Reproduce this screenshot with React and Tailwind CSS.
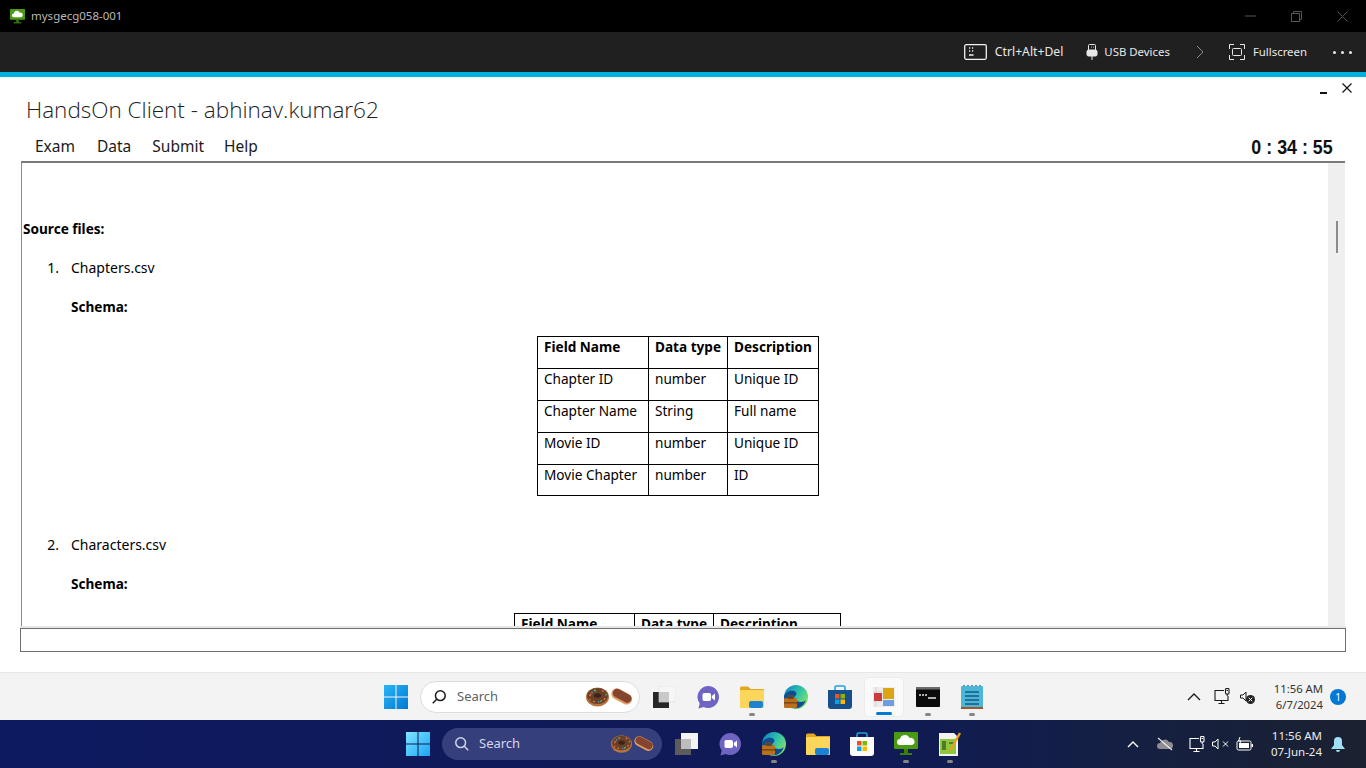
import React from 'react';

const sans = 'font-["Noto_Sans",sans-serif]';

const StartLogo = ({ light }) => (
  <svg width="24" height="24" viewBox="0 0 24 24">
    <defs>
      <linearGradient id={light ? 'winL' : 'winD'} x1="0" y1="0" x2="1" y2="1">
        <stop offset="0" stopColor={light ? '#29b6f6' : '#7fe6ff'} />
        <stop offset="1" stopColor={light ? '#0078d4' : '#1ba4f5'} />
      </linearGradient>
    </defs>
    <path fill={`url(#${light ? 'winL' : 'winD'})`} d="M0 0h11.5v11.5H0zM12.5 0H24v11.5H12.5zM0 12.5h11.5V24H0zM12.5 12.5H24V24H12.5z" />
  </svg>
);

const Snacks = ({ width = 48 }) => (
  <svg width={width} height="20" viewBox="0 0 48 20">
    <ellipse cx="11.5" cy="10" rx="11.5" ry="9.5" fill="#b8743c" />
    <ellipse cx="11.5" cy="9" rx="10.5" ry="8" fill="#6b4028" />
    <ellipse cx="11.5" cy="8.5" rx="3.6" ry="2.2" fill="#3a241a" />
    <path d="M3.5 9l1.5-2M7 14l2 1M16 3.5l2 1M19 11l-1 2M3.5 12l1 1.5" stroke="#e8743c" strokeWidth="1.3" />
    <path d="M8 3.5l2 0M14 14.5l2-1M20 7l0 1.4" stroke="#58c07a" strokeWidth="1.3" />
    <path d="M5.5 6l1-1M12 15l1 0" stroke="#4aa3e0" strokeWidth="1.3" />
    <g transform="rotate(28 36 9)">
      <rect x="25" y="4" width="22" height="11" rx="5.5" fill="#e39a68" />
      <rect x="26" y="4.5" width="20" height="8.5" rx="4.2" fill="#84452f" />
    </g>
  </svg>
);

const SearchBox = ({ dark }) => (
  <div className={`flex items-center rounded-full ${dark ? 'w-[220px] h-8 bg-[#353f7c] pl-3 pr-[7px]' : 'w-[220px] h-8 bg-white border border-[#dcdcdc] pl-[10px] pr-[5px]'}`}>
    <svg width="16" height="16" viewBox="0 0 18 18" fill="none" stroke={dark ? '#cfd4ea' : '#1c1c1c'} strokeWidth="1.7" className={dark ? 'mr-[9px]' : 'mr-[10px] -scale-x-100'}>
      <circle cx="7.5" cy="7.5" r="5.5" />
      <path d="M11.6 11.6L16 16" />
    </svg>
    <span className={`flex-1 text-[13px] ${dark ? 'text-[#d5d8ea]' : 'text-[#5f5f5f]'}`}>Search</span>
    <Snacks width={dark ? 44 : 48} />
  </div>
);

const TaskView = ({ dark }) => (
  <svg width="24" height="22" viewBox="0 0 24 22">
    <rect x="1" y="6" width="16" height="16" fill={dark ? '#5c5c5c' : '#262626'} />
    <rect x="7" y="0" width="17" height="16" fill={dark ? '#f4f4f4' : '#f6f6f6'} stroke={dark ? 'none' : '#dcdcdc'} strokeWidth="0.6" />
    <rect x="7" y="6" width="10" height="10" fill={dark ? '#bdbdbd' : '#c9c9c9'} />
  </svg>
);

const Teams = () => (
  <svg width="24" height="24" viewBox="0 0 24 24">
    <path fill="#6f63c4" d="M12 1a11 11 0 1 1-4.4 21.1L2.5 23.5l1.2-5A11 11 0 0 1 12 1z" />
    <rect x="6.5" y="8" width="8.5" height="8" rx="1.8" fill="#fff" />
    <path fill="#fff" d="M15.8 11l3.2-2.4v6.8L15.8 13z" />
  </svg>
);

const Folder = () => (
  <svg width="24" height="22" viewBox="0 0 24 22">
    <path fill="#e3a71f" d="M0 2a1.5 1.5 0 0 1 1.5-1.5H8L10.5 3H24v6H0z" />
    <rect y="4" width="24" height="18" rx="1" fill="#fbd65a" />
    <rect x="9" y="15" width="14" height="7" rx="2" fill="#1c83d4" />
  </svg>
);

const Edge = () => (
  <svg width="24" height="24" viewBox="0 0 24 24">
    <defs>
      <linearGradient id="edgeG" x1="0" y1="0" x2="1" y2="0.6">
        <stop offset="0" stopColor="#0b7fc4" />
        <stop offset="0.6" stopColor="#30c3a8" />
        <stop offset="1" stopColor="#7fe06a" />
      </linearGradient>
    </defs>
    <circle cx="12" cy="12" r="12" fill="url(#edgeG)" />
    <path fill="#114a94" d="M0 12c1-5 6-7 10-6 3 1 3 4 1 5-2 2 0 6 6 6 2 0 4-1 5-2-2 6-7 9-12 8C4 22 0 18 0 12z" />
    <rect x="0" y="13" width="13" height="10" rx="1.5" fill="#b8701f" />
    <rect x="0" y="17" width="13" height="1.6" fill="#7d4a12" />
    <rect x="4" y="11" width="5" height="2.5" fill="none" stroke="#7d4a12" strokeWidth="1.2" />
  </svg>
);

const StoreIcon = ({ white }) => (
  <svg width="24" height="24" viewBox="0 0 24 24">
    <path d="M7 5V2.5A1.5 1.5 0 0 1 8.5 1h7A1.5 1.5 0 0 1 17 2.5V5" fill="none" stroke="#1fa3d8" strokeWidth="1.6" />
    <path fill={white ? '#fbfbfb' : '#174f8a'} d="M0 5h24v16a3 3 0 0 1-3 3H3a3 3 0 0 1-3-3z" />
    <rect x="7" y="9" width="4.5" height="4.5" fill="#f25022" />
    <rect x="12.5" y="9" width="4.5" height="4.5" fill="#7fba00" />
    <rect x="7" y="14.5" width="4.5" height="4.5" fill="#00a4ef" />
    <rect x="12.5" y="14.5" width="4.5" height="4.5" fill="#ffb900" />
  </svg>
);

const ControlPanel = () => (
  <svg width="22" height="20" viewBox="0 0 22 20">
    <rect width="22" height="20" fill="#ececec" />
    <path d="M0 5h9M0 14h9M3 0v20" stroke="#c9c9c9" strokeWidth="0.6" />
    <rect x="1" y="6" width="8" height="8" fill="#cf3a3a" />
    <rect x="10" y="1" width="11" height="11" fill="#dca512" />
    <rect x="10" y="13" width="11" height="6" fill="#6f9be0" />
  </svg>
);

const Cmd = () => (
  <svg width="24" height="20" viewBox="0 0 24 20">
    <rect width="24" height="20" rx="1" fill="#0b0b0b" />
    <rect width="24" height="2.5" fill="#6b6b6b" />
    <path d="M3 8h2M6 8h2M9 8l2 0M12 11h8" stroke="#e6e6e6" strokeWidth="1.4" />
  </svg>
);

const Notepad = () => (
  <svg width="22" height="24" viewBox="0 0 22 24">
    <rect y="1" width="22" height="22" rx="1" fill="#4cb6d6" />
    <rect y="22" width="22" height="2" fill="#a0562a" />
    <path d="M3 1V0M7 1V0M11 1V0M15 1V0M19 1V0" stroke="#2a6f86" strokeWidth="1.5" />
    <path d="M4 7h14M4 11h14M4 15h14M4 19h14" stroke="#155a82" strokeWidth="1.6" />
  </svg>
);

const VmMonitor = ({ size = 24 }) => (
  <svg width={size} height={size} viewBox="0 0 24 24">
    <rect width="24" height="17" rx="1" fill="#4a9a12" />
    <path fill="#fff" d="M6 13a3 3 0 0 1 0-6 5 5 0 0 1 9.5-1A3.5 3.5 0 0 1 18 13z" />
    <rect x="10" y="17" width="4" height="4" fill="#3b7f0e" />
    <rect x="6" y="21" width="12" height="2" fill="#3b7f0e" />
  </svg>
);

const NotepadPen = () => (
  <svg width="24" height="24" viewBox="0 0 24 24">
    <path fill="#f3f3f3" d="M1 1h15l4 4v19H1z" />
    <rect x="2" y="7" width="16" height="15" fill="#8dc63f" />
    <path d="M5 9v9M7 9v9M11 11h5" stroke="#1f3d10" strokeWidth="1.1" />
    <path d="M22 1L12 19" stroke="#e6a21a" strokeWidth="2.4" />
  </svg>
);

const Slot = ({ children, dot, active, className = '' }) => (
  <div className={`relative flex items-center justify-center ${className}`}>
    {children}
    {dot && <span className="absolute left-1/2 -translate-x-1/2 bottom-0 w-[6px] h-[3px] rounded-full bg-[#858585]" />}
    {active && <span className="absolute left-1/2 -translate-x-1/2 bottom-[1px] w-4 h-[3px] rounded-full bg-[#0078d4]" />}
  </div>
);

const NetIcon = ({ color }) => (
  <svg width="17" height="17" viewBox="0 0 17 17" fill="none" stroke={color} strokeWidth="1.1">
    <path d="M10 2.5H1v10h13V8" />
    <path d="M7.5 12.5v3M4.5 15.5h6" />
    <rect x="11.5" y="0.5" width="3.5" height="5.5" rx="1" />
    <path d="M13.2 6v2M12.5 2.5h1.4" />
  </svg>
);

const FileTable = ({ rows, widths, className = '' }) => (
  <table className={`border-collapse text-[13.6px] leading-[19px] text-black ${className}`}>
    <tbody>
      {rows.map((row, i) => (
        <tr key={i} className={i === rows.length - 1 ? 'h-[31px]' : 'h-[32px]'}>
          {row.map((cell, j) => (
            <td key={j} className={`border border-black align-top pl-[6px] pt-0 pr-0 whitespace-nowrap ${i === 0 ? 'font-bold' : ''} ${widths[j]}`}>
              {cell}
            </td>
          ))}
        </tr>
      ))}
    </tbody>
  </table>
);

export default function App() {
  const chapterRows = [
    ['Field Name', 'Data type', 'Description'],
    ['Chapter ID', 'number', 'Unique ID'],
    ['Chapter Name', 'String', 'Full name'],
    ['Movie ID', 'number', 'Unique ID'],
    ['Movie Chapter', 'number', 'ID'],
  ];

  return (
    <div className={`w-[1366px] h-[768px] overflow-hidden flex flex-col bg-white ${sans}`}>
      {/* remote desktop title bar */}
      <div className="h-8 shrink-0 bg-black flex items-center pl-[10px]">
        <VmMonitor size={15} />
        <span className="ml-[6px] text-[11.5px] text-[#b9b9b9]">mysgecg058-001</span>
        <div className="ml-auto flex items-center text-[#555555]">
          <svg width="11" height="2" viewBox="0 0 11 2" className="mr-[35px]"><path d="M0 1h11" stroke="currentColor" /></svg>
          <svg width="11" height="11" viewBox="0 0 11 11" fill="none" stroke="currentColor" className="mr-[35px]"><rect x="0.5" y="2.5" width="8" height="8" /><path d="M2.5 2.5v-2h8v8h-2" /></svg>
          <svg width="11" height="11" viewBox="0 0 11 11" fill="none" stroke="currentColor" className="mr-[18px]"><path d="M0.5 0.5l10 10M10.5 0.5l-10 10" /></svg>
        </div>
      </div>

      {/* session toolbar */}
      <div className="h-10 shrink-0 bg-[#202020] flex items-center justify-end text-[11.4px] text-[#e8e8e8]">
        <svg width="23" height="16" viewBox="0 0 23 16" fill="none" stroke="#f2f2f2" strokeWidth="1.3" className="mr-[8px]">
          <rect x="0.7" y="0.7" width="21.6" height="14.6" rx="1.5" />
          <path d="M5 4h1.2M8 4h1.2M5 7h1.2M8 7h1.2M5 11h4.5" strokeWidth="1.4" />
        </svg>
        <span className="mr-[23px] text-[12.2px]">Ctrl+Alt+Del</span>
        <svg width="12" height="16" viewBox="0 0 12 16" fill="none" stroke="#e8e8e8" className="mr-[6px]">
          <path d="M2.5 6V1.5a1 1 0 0 1 1-1h5a1 1 0 0 1 1 1V6" />
          <rect x="1" y="6" width="10" height="6" rx="1.5" fill="#e8e8e8" />
          <path d="M6 12v4M5 3h0.8M7 3h0.8" />
        </svg>
        <span className="mr-[26px]">USB Devices</span>
        <svg width="8" height="14" viewBox="0 0 8 14" fill="none" stroke="#8a8a8a" className="mr-[25px]"><path d="M1 1l6 6-6 6" /></svg>
        <svg width="16" height="16" viewBox="0 0 16 16" fill="none" stroke="#e8e8e8" className="mr-[8px]">
          <path d="M0.5 5V0.5H5M11 0.5h4.5V5M15.5 11v4.5H11M5 15.5H0.5V11" />
          <rect x="3.5" y="4.5" width="9" height="7" rx="1" />
        </svg>
        <span className="mr-[26px]">Fullscreen</span>
        <span className="flex gap-[5px] mr-[14px]">
          <span className="w-[3px] h-[3px] rounded-full bg-[#e8e8e8]" />
          <span className="w-[3px] h-[3px] rounded-full bg-[#e8e8e8]" />
          <span className="w-[3px] h-[3px] rounded-full bg-[#e8e8e8]" />
        </span>
      </div>
      <div className="h-[5px] shrink-0 bg-[#00b0df]" />

      {/* exam client window */}
      <div className="flex-1 flex flex-col min-h-0">
        <div className="h-[48px] shrink-0 flex justify-between pl-[26px]">
          <h1 className="mt-[17px] text-[22.5px] leading-[32px] font-light text-[#1e1e1e] font-['Open_Sans',sans-serif]">HandsOn Client - abhinav.kumar62</h1>
          <div className="flex items-start gap-[14px] pt-[3px] pr-[14px]">
            <svg width="9" height="12" viewBox="0 0 9 12" className="mt-[2px]"><path d="M1 11h7" stroke="#111" strokeWidth="2" /></svg>
            <svg width="10" height="10" viewBox="0 0 10 10" className="mt-[3px]"><path d="M0.5 0.5l9 9M9.5 0.5l-9 9" stroke="#111" strokeWidth="1.2" /></svg>
          </div>
        </div>

        <div className="h-[36px] shrink-0 flex items-center pl-[35px] pr-[33px] pt-[8px] text-[15.5px] text-[#1a1a1a]">
          <span className="mr-[22px]">Exam</span>
          <span className="mr-[21px]">Data</span>
          <span className="mr-[20px]">Submit</span>
          <span>Help</span>
          <span className="ml-auto origin-right scale-x-[0.85] text-[21px] font-bold text-[#111] font-['Liberation_Sans',sans-serif]">0 : 34 : 55</span>
        </div>

        {/* instructions pane */}
        <div className="ml-[21px] mr-[21px] h-[465px] shrink-0 flex border-t-2 border-t-[#7a7a7a] border-l border-l-[#8a8a8a] overflow-hidden">
          <div className="flex-1 min-w-0 overflow-hidden text-[14px] leading-[19px] text-black relative">
            <p className="mt-[56px] pl-[1px] font-bold text-[13.6px]">Source files:</p>
            <div className="mt-[20px] flex">
              <span className="w-[49px] text-right pr-[12px]">1.</span>
              <span>Chapters.csv</span>
            </div>
            <p className="mt-[20px] pl-[49px] font-bold text-[13.6px]">Schema:</p>
            <div className="mt-[20px] flex justify-center">
              <FileTable rows={chapterRows} widths={['w-[111px]', 'w-[79px]', 'w-[91px]']} className="ml-[6px]" />
            </div>
            <div className="mt-[39px] flex">
              <span className="w-[49px] text-right pr-[12px]">2.</span>
              <span>Characters.csv</span>
            </div>
            <p className="mt-[20px] pl-[49px] font-bold text-[13.6px]">Schema:</p>
            <div className="mt-[20px] flex justify-center">
              <FileTable rows={[['Field Name', 'Data type', 'Description']]} widths={['w-[120px]', 'w-[79px]', 'w-[127px]']} className="ml-[5px]" />
            </div>
          </div>
          <div className="w-[17px] shrink-0 bg-[#efefef] flex justify-center">
            <div className="mt-[58px] w-[2px] h-[32px] bg-[#8c8c8c]" />
          </div>
        </div>

        <div className="mx-[20px] h-[2px] shrink-0 bg-[#e6e6e6]" />
        <div className="mx-[20px] h-[24px] shrink-0 border border-[#6e6e6e] bg-white" />
        <div className="flex-1" />
      </div>

      {/* inner windows taskbar */}
      <div className="h-[48px] shrink-0 bg-[#f3f3f3] border-t border-t-[#e6e6e6] flex items-center text-[#1b1b1b]">
        <div className="ml-[384px]"><StartLogo light /></div>
        <div className="ml-[12px]"><SearchBox /></div>
        <div className="ml-[12px] flex items-center h-[38px]">
          <Slot className="w-[24px] h-[38px]"><TaskView /></Slot>
          <Slot className="w-[24px] h-[38px] ml-[20px]"><Teams /></Slot>
          <Slot dot className="w-[24px] h-[38px] ml-[20px]"><Folder /></Slot>
          <Slot className="w-[24px] h-[38px] ml-[20px]"><Edge /></Slot>
          <Slot className="w-[24px] h-[38px] ml-[20px]"><StoreIcon /></Slot>
          <Slot active className="w-[38px] h-[38px] ml-[13px] bg-[#fafafa] rounded-[4px] shadow-[0_0_0_1px_#ececec]"><ControlPanel /></Slot>
          <Slot dot className="w-[24px] h-[38px] ml-[13px]"><Cmd /></Slot>
          <Slot dot className="w-[24px] h-[38px] ml-[20px]"><Notepad /></Slot>
        </div>
        <div className="ml-auto flex items-center pr-[20px]">
          <svg width="14" height="8" viewBox="0 0 14 8" fill="none" stroke="#1b1b1b" strokeWidth="1.3"><path d="M1 7l6-6 6 6" /></svg>
          <div className="ml-[13px]"><NetIcon color="#1b1b1b" /></div>
          <svg width="16" height="16" viewBox="0 0 16 16" className="ml-[9px]">
            <path d="M0.5 6h2.5l3-3v9l-3-3H0.5z" fill="none" stroke="#1b1b1b" />
            <circle cx="10.5" cy="10.5" r="4.5" fill="#222" />
            <path d="M8.7 8.7l3.6 3.6M12.3 8.7l-3.6 3.6" stroke="#fff" />
          </svg>
          <div className="ml-[17px] w-[50px] text-right text-[11.3px] leading-[16px] text-[#333]">
            <div className="whitespace-nowrap">11:56 AM</div>
            <div>6/7/2024</div>
          </div>
          <span className="ml-[7px] w-4 h-4 rounded-full bg-[#0078d4] text-white text-[10px] leading-4 text-center">1</span>
        </div>
      </div>

      {/* host windows taskbar */}
      <div className="h-[48px] shrink-0 bg-gradient-to-r from-[#0e1a60] via-[#101a55] via-65% to-[#1b2130] flex items-center">
        <div className="ml-[406px]"><StartLogo /></div>
        <div className="ml-[12px]"><SearchBox dark /></div>
        <div className="ml-[12px] flex items-center">
          <Slot className="w-[24px] h-[38px]"><TaskView dark /></Slot>
          <Slot className="w-[24px] h-[38px] ml-[20px]"><Teams /></Slot>
          <Slot dot className="w-[24px] h-[38px] ml-[20px]"><Edge /></Slot>
          <Slot className="w-[24px] h-[38px] ml-[20px]"><Folder /></Slot>
          <Slot className="w-[24px] h-[38px] ml-[20px]"><StoreIcon white /></Slot>
          <Slot dot className="w-[24px] h-[38px] ml-[20px]"><VmMonitor /></Slot>
          <Slot dot className="w-[24px] h-[38px] ml-[20px]"><NotepadPen /></Slot>
        </div>
        <div className="ml-auto flex items-center pr-[21px] text-white">
          <svg width="12" height="7" viewBox="0 0 12 7" fill="none" stroke="#fff" strokeWidth="1.4"><path d="M1 6l5-5 5 5" /></svg>
          <svg width="16" height="14" viewBox="0 0 16 14" className="ml-[18px]">
            <path fill="#8f8f93" d="M3 12a3 3 0 0 1 0-6 5 5 0 0 1 9-1 3.5 3.5 0 0 1 1 7z" />
            <path d="M1 1l14 12" stroke="#e8e8e8" strokeWidth="1.2" />
          </svg>
          <div className="ml-[16px]"><NetIcon color="#fff" /></div>
          <svg width="18" height="12" viewBox="0 0 18 12" fill="none" stroke="#fff" className="ml-[6px]">
            <path d="M0.5 4h2.5l3-3v10l-3-3H0.5z" />
            <path d="M11 3.5l5 5M16 3.5l-5 5" />
          </svg>
          <svg width="17" height="14" viewBox="0 0 17 14" className="ml-[6px]">
            <rect x="1" y="4" width="14" height="9" rx="1.5" fill="none" stroke="#fff" />
            <rect x="3" y="6" width="10" height="5" fill="#fff" />
            <rect x="15.5" y="7" width="1.5" height="3" fill="#fff" />
            <path d="M4 0l-1.5 4H5L3.5 7" stroke="#fff" fill="none" />
          </svg>
          <div className="ml-[13px] w-[56px] text-right text-[11.5px] leading-[16px] text-[#ececec]">
            <div className="whitespace-nowrap">11:56 AM</div>
            <div className="whitespace-nowrap">07-Jun-24</div>
          </div>
          <svg width="14" height="15" viewBox="0 0 14 15" className="ml-[9px]">
            <path fill="#9fe0f5" d="M7 0a4 4 0 0 1 4 4v4l3 4H0l3-4V4a4 4 0 0 1 4-4zM5 13h4a2 2 0 0 1-4 0z" />
          </svg>
        </div>
      </div>
    </div>
  );
}
